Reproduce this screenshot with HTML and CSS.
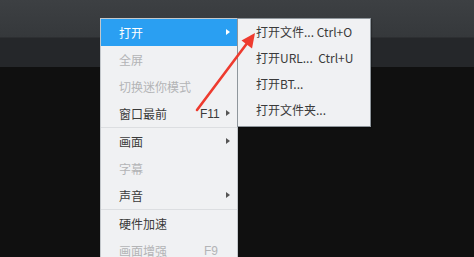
FILE: index.html
```html
<!DOCTYPE html>
<html lang="zh-CN">
<head>
<meta charset="utf-8">
<link rel="stylesheet" href="styles.css">
</head>
<body>
<div class="app">
  <div class="titlebar"></div>
  <div class="toolbar"></div>
  <div class="video"></div>
</div>

<div class="menu main-menu">
  <div class="item active"><span class="label">打开</span><span class="arrow"></span></div>
  <div class="item disabled"><span class="label">全屏</span></div>
  <div class="item disabled"><span class="label">切换迷你模式</span></div>
  <div class="item"><span class="label">窗口最前</span><span class="key">F11</span><span class="arrow"></span></div>
  <div class="sep"></div>
  <div class="item"><span class="label">画面</span><span class="arrow"></span></div>
  <div class="item disabled"><span class="label">字幕</span></div>
  <div class="item"><span class="label">声音</span><span class="arrow"></span></div>
  <div class="sep"></div>
  <div class="item"><span class="label">硬件加速</span></div>
  <div class="item item-last disabled"><span class="label">画面增强</span><span class="key key-f9">F9</span></div>
</div>

<div class="menu sub-menu">
  <div class="sub-item">打开文件... Ctrl+O</div>
  <div class="sub-item">打开URL...&nbsp; Ctrl+U</div>
  <div class="sub-item">打开BT...</div>
  <div class="sub-item">打开文件夹...</div>
</div>

<svg class="annotation" width="474" height="257" viewBox="0 0 474 257">
  <line x1="197" y1="110" x2="248" y2="42" stroke="#ee3b2f" stroke-width="2.6" stroke-linecap="round"/>
  <polygon points="255,33 252,48.5 241.5,40.5" fill="#ee3b2f"/>
</svg>
</body>
</html>
```

FILE: styles.css
```css
html, body {
  margin: 0;
  padding: 0;
}
body {
  width: 474px;
  height: 257px;
  overflow: hidden;
  background: #101010;
  font-family: "Noto Sans CJK SC", "Noto Sans", sans-serif;
  font-size: 12px;
}
.app {
  display: flex;
  flex-direction: column;
  height: 257px;
}
.titlebar {
  height: 37px;
  background: linear-gradient(#3d4043, #35383b);
}
.toolbar {
  height: 30px;
  background: #25272a;
  border-top: 1px solid #2d2f32;
  box-sizing: border-box;
}
.video {
  flex: 1;
  background: #101010;
}
.menu {
  position: absolute;
  background: #f0f1f3;
  box-sizing: border-box;
}
.main-menu {
  left: 100px;
  top: 18px;
  width: 138px;
  height: 239px;
  overflow: hidden;
  border: 1px solid #c3c7cb;
  border-bottom: none;
}
.item {
  height: 27px;
  display: flex;
  align-items: center;
  padding-left: 18px;
  color: #3a3a3a;
  position: relative;
}
.item-last {
  height: 20px;
  align-items: flex-start;
  line-height: 20px;
  padding-top: 4px;
  box-sizing: border-box;
  overflow: visible;
}
.item.active {
  background: #2a9ff2;
  color: #ffffff;
}
.item.disabled {
  color: #b3b4b6;
}
.label {
  flex: 1;
}
.key {
  position: absolute;
  left: 99px;
  font-family: "Liberation Sans", sans-serif;
  font-size: 12px;
}
.key-f9 {
  left: 103px;
}
.arrow {
  position: absolute;
  left: 125px;
  top: 10px;
  width: 0;
  height: 0;
  border-top: 3.5px solid transparent;
  border-bottom: 3.5px solid transparent;
  border-left: 4px solid #555;
}
.item.active .arrow {
  border-left-color: #ffffff;
}
.sep {
  height: 1px;
  background: #dcdee1;
}
.sub-menu {
  left: 237px;
  top: 18px;
  width: 134px;
  height: 109px;
  border: 1px solid #8f969c;
  box-shadow: 1px 1px 1px rgba(0, 0, 0, 0.25);
}
.sub-item {
  height: 26px;
  line-height: 26px;
  padding-left: 18px;
  color: #3a3a3a;
  white-space: nowrap;
}
.annotation {
  position: absolute;
  left: 0;
  top: 0;
  pointer-events: none;
}
```
